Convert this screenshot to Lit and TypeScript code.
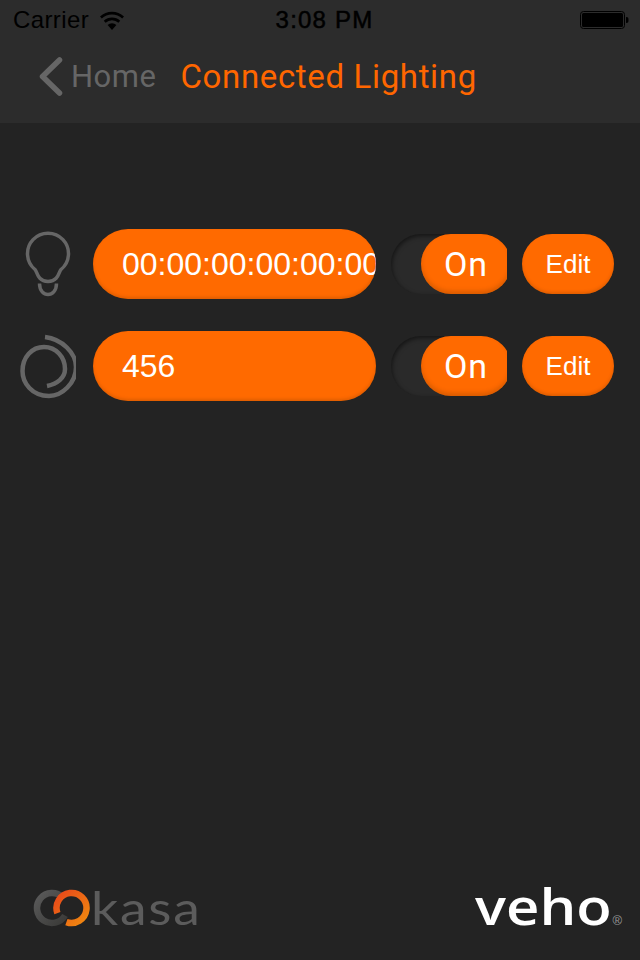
import { LitElement, html, css } from 'lit';
import { customElement } from 'lit/decorators.js';

const bulbIcon = html`<svg class="icon" width="56" height="70" viewBox="0 0 56 70" fill="none" stroke="#666" stroke-width="3.5">
  <path d="M15 40.5A20.5 20.5 0 1 1 41 40.5C38.5 43 39 52 28 52.5C17 52 17.5 43 15 40.5Z" />
  <path d="M19.5 54.5C19.5 62 24 65.5 28 65.5C32 65.5 36.5 62 36.5 54.5" />
</svg>`;

const ringIcon = html`<svg class="icon" width="56" height="70" viewBox="0 0 56 70" fill="none" stroke="#666" stroke-width="4.5">
  <path d="M25 6C42 8 56 22 56 36C56 52 42 65 29 65C12 65 2.5 52 2.5 40C2.5 26 12 16 24 16C36 16 45 26 45 38C45 47 37 53 27 55" />
</svg>`;

const rows = [
  { icon: bulbIcon, name: '00:00:00:00:00:00' },
  { icon: ringIcon, name: '456' },
];

@customElement('app-root')
export class AppRoot extends LitElement {
  static styles = css`
    :host {
      display: flex;
      flex-direction: column;
      width: 640px;
      height: 960px;
      background: #232323;
      font-family: 'Liberation Sans', sans-serif;
      overflow: hidden;
    }
    .top {
      height: 123px;
      background: #2c2c2c;
      flex: none;
    }
    .status {
      height: 40px;
      display: grid;
      grid-template-columns: 1fr auto 1fr;
      align-items: center;
      padding: 0 11px 0 13px;
      color: #000;
      font-size: 24px;
    }
    .carrier {
      display: flex;
      align-items: center;
      gap: 10px;
      letter-spacing: 0.4px;
    }
    .time {
      font-size: 24px;
      letter-spacing: 1.2px;
      margin-left: 7px;
      -webkit-text-stroke: 0.5px #000;
    }
    .battery {
      justify-self: end;
      display: block;
    }
    .nav {
      display: flex;
      align-items: center;
      height: 74px;
      padding: 0 0 2px 39px;
      box-sizing: border-box;
      font-family: Roboto, sans-serif;
    }
    .home {
      color: #666;
      font-size: 31px;
      letter-spacing: 0.5px;
      margin-left: 7px;
      margin-right: 24px;
    }
    .title {
      color: #ff6600;
      font-size: 33px;
      letter-spacing: 0.65px;
    }
    .list {
      display: flex;
      flex-direction: column;
      gap: 32px;
      padding: 106px 0 0 20px;
    }
    .row {
      display: flex;
      align-items: center;
      height: 70px;
    }
    .icon {
      display: block;
      flex: none;
    }
    .name {
      width: 283px;
      height: 70px;
      margin-left: 17px;
      padding-left: 29px;
      box-sizing: border-box;
      border-radius: 35px;
      background: #ff6a00;
      box-shadow: inset 0 -2px 3px rgba(130, 60, 0, 0.25);
      color: #fff;
      font-size: 32px;
      line-height: 70px;
      white-space: nowrap;
      overflow: hidden;
    }
    .switch {
      position: relative;
      width: 116px;
      height: 60px;
      margin-left: 15px;
      overflow: hidden;
      flex: none;
    }
    .track {
      width: 120px;
      height: 60px;
      border-radius: 30px;
      background: #2a2a2a;
      box-shadow: inset 1px 2px 4px rgba(0, 0, 0, 0.5);
    }
    .thumb {
      position: absolute;
      top: 0;
      left: 30px;
      width: 90px;
      height: 60px;
      border-radius: 30px;
      background: #ff6a00;
      box-shadow: inset 0 -3px 4px rgba(130, 60, 0, 0.3);
      color: #fff;
      font-family: Roboto, sans-serif;
      font-size: 34px;
      line-height: 60px;
      text-align: center;
      letter-spacing: 1px;
    }
    .edit {
      width: 92px;
      height: 60px;
      margin-left: 15px;
      border-radius: 30px;
      background: #ff6a00;
      box-shadow: inset 0 -2px 3px rgba(130, 60, 0, 0.25);
      color: #fff;
      font-size: 26px;
      line-height: 60px;
      text-align: center;
    }
    .footer {
      margin-top: auto;
      height: 78px;
      padding: 0 18px 0 33px;
      display: flex;
      justify-content: space-between;
      align-items: flex-start;
    }
    .kasa {
      display: flex;
      align-items: center;
      height: 52px;
    }
    .kasa-word {
      color: #5c5c5c;
      font-family: Lato, sans-serif;
      font-weight: 400;
      font-size: 47px;
      letter-spacing: 1.5px;
      line-height: 52px;
      margin-top: -2px;
      transform: scaleX(1.14);
      transform-origin: left center;
    }
    .veho {
      display: flex;
      align-items: baseline;
      color: #fff;
      height: 52px;
      margin-top: -2px;
    }
    .veho-word {
      font-family: 'Open Sans', sans-serif;
      font-weight: 600;
      font-size: 50px;
      line-height: 52px;
      transform: scaleX(1.16);
      transform-origin: left center;
      margin-right: 20px;
    }
    .reg {
      font-size: 13px;
      color: #999;
    }
  `;

  render() {
    return html`
      <div class="top">
        <div class="status">
          <div class="carrier">
            Carrier
            <svg width="26" height="20" viewBox="0 0 26 20" fill="#000">
              <path d="M13 20L8.6 15A6.4 6.4 0 0 1 17.4 15Z" />
              <path d="M6.6 12.8L4.8 10.8A12 12 0 0 1 21.2 10.8L19.4 12.8A9.4 9.4 0 0 0 6.6 12.8Z" />
              <path d="M2.8 8.6L1 6.6A17.6 17.6 0 0 1 25 6.6L23.2 8.6A15 15 0 0 0 2.8 8.6Z" />
            </svg>
          </div>
          <div class="time">3:08 PM</div>
          <svg class="battery" width="49" height="20" viewBox="0 0 49 20">
            <rect x="0.5" y="1.5" width="44" height="17" rx="3" fill="none" stroke="#000" />
            <rect x="2" y="3" width="41" height="14" rx="1.5" fill="#000" />
            <path d="M46 7C48.5 7 48.5 8 48.5 10C48.5 12 48.5 13 46 13Z" fill="#000" />
          </svg>
        </div>
        <div class="nav">
          <svg width="25" height="40" viewBox="0 0 25 40" fill="none" stroke="#666" stroke-width="5.5" stroke-linecap="round" stroke-linejoin="round">
            <path d="M20.5 4L3.5 20.5L20.5 37" />
          </svg>
          <span class="home">Home</span>
          <span class="title">Connected Lighting</span>
        </div>
      </div>
      <div class="list">
        ${rows.map(
          (r) => html`
            <div class="row">
              ${r.icon}
              <div class="name">${r.name}</div>
              <div class="switch">
                <div class="track"></div>
                <div class="thumb">On</div>
              </div>
              <div class="edit">Edit</div>
            </div>
          `
        )}
      </div>
      <div class="footer">
        <div class="kasa">
          <svg width="58" height="38" viewBox="0 0 58 38" fill="none" stroke-width="6.5">
            <defs>
              <linearGradient id="kasaOrange" x1="0" y1="0" x2="1" y2="1">
                <stop offset="0" stop-color="#e8471a" />
                <stop offset="1" stop-color="#f08a10" />
              </linearGradient>
              <linearGradient id="kasaGray" x1="0" y1="0" x2="1" y2="1">
                <stop offset="0" stop-color="#5a5a5a" />
                <stop offset="1" stop-color="#3a3a38" />
              </linearGradient>
            </defs>
            <path d="M29.6 8.4A15 15 0 1 0 32 26.5" stroke="url(#kasaGray)" />
            <path d="M33.4 33.1A15 15 0 1 0 24.4 24.1" stroke="url(#kasaOrange)" />
          </svg>
          <span class="kasa-word">kasa</span>
        </div>
        <div class="veho">
          <span class="veho-word">veho</span><span class="reg">®</span>
        </div>
      </div>
    `;
  }
}
